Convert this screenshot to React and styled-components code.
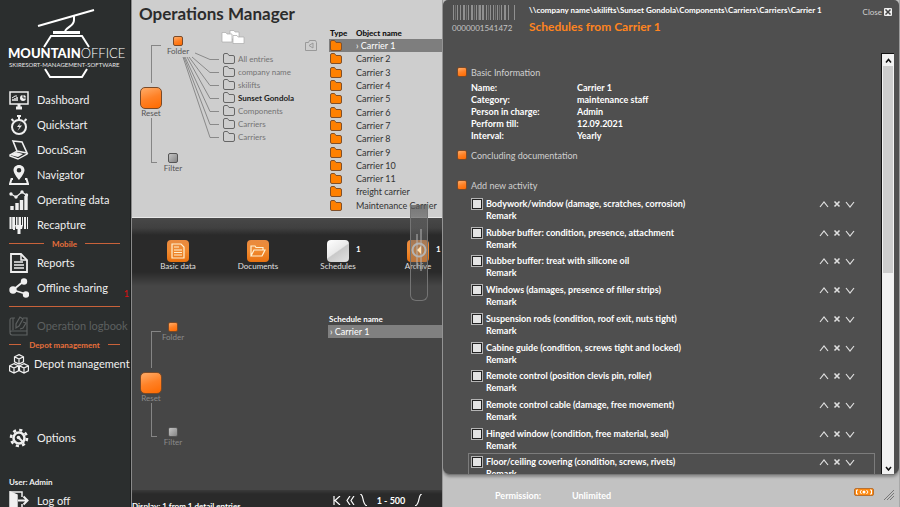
import React, { useState } from 'react'
import styled, { createGlobalStyle, css } from 'styled-components'

const GlobalStyle = createGlobalStyle`
  * { box-sizing: border-box; }
  body {
    margin: 0;
    background: #464646;
    font-family: Lato, "Open Sans", sans-serif;
    font-size: 9px;
    overflow: hidden;
  }
  button {
    border: 0;
    padding: 0;
    background: none;
    color: inherit;
    font: inherit;
    cursor: pointer;
  }
  svg { display: block; flex: none; }
  h1, h2, p, ul, dl, dd { margin: 0; padding: 0; }
  ul { list-style: none; }
`;

const Page = styled.div`
  display: flex;
  height: 100vh;
  overflow: hidden;
`;

/* ---------- sidebar ---------- */

const Sidebar = styled.nav`
  display: flex;
  flex-direction: column;
  flex: none;
  width: 131px;
  background: #2b2e2e;
  box-shadow: inset -1px 0 #1b1d1d;
  overflow: hidden;
  color: #f0f0f0;
`;

const LogoBox = styled.div`
  flex: none;
  height: 87px;
  padding-left: 5px;
`;

const NavItem = styled.a`
  display: flex;
  align-items: center;
  flex: none;
  gap: ${p => p.$tight ? 5 : 8}px;
  height: 25px;
  padding-left: 9px;
  margin-top: ${p => p.$space || 0}px;
  color: ${p => p.$off ? '#5d6060' : '#f0f0f0'};
  font-size: 11px;
  line-height: 14px;
  white-space: nowrap;
  text-decoration: none;
`;

const Badge = styled.span`
  align-self: flex-end;
  margin-left: auto;
  padding-right: 2px;
  color: #e01010;
  font-size: 9px;
  line-height: 12px;
`;

const Divider = styled.div`
  display: flex;
  align-items: center;
  flex: none;
  gap: 8px;
  height: 13px;
  margin: 0 11px 0 9px;
  color: #e8703c;
  font-size: 8px;
  font-weight: 700;
  white-space: nowrap;
  &::before, &::after {
    content: '';
    flex: 1;
    height: 1px;
    background: #c9623a;
  }
  ${p => p.$plain && css`gap: 0;`}
`;

const UserName = styled.p`
  flex: none;
  margin-top: 26px;
  padding-left: 9px;
  font-size: 8px;
  font-weight: 700;
  line-height: 12px;
`;

/* ---------- middle ---------- */

const Main = styled.main`
  display: flex;
  flex-direction: column;
  flex: 1;
  min-width: 0;
  border-left: 1px solid #8a8a8a;
  background: #464646;
  position: relative;
`;

const TopPane = styled.section`
  flex: none;
  height: 218px;
  padding-left: 7px;
  background: #cecece;
  border-bottom: 1px solid #e8e8e8;
  color: #333;
`;

const Title = styled.h1`
  height: 28px;
  color: #2c2c2c;
  font-size: 17px;
  line-height: 28px;
  white-space: nowrap;
`;

const PaneRow = styled.div`
  display: flex;
`;

const Branch = styled.div`
  flex: none;
  width: 58px;
  padding-top: ${p => p.$top}px;
  color: ${p => p.$dark ? '#8a8a8a' : '#555'};
  font-size: 8px;
`;

const BranchEnd = styled.div`
  display: flex;
  height: ${p => p.$height}px;
  padding-left: 12px;
  gap: ${p => p.$gap}px;
`;

const Corner = styled.span`
  flex: none;
  width: ${p => p.$bottom ? 6 : 10}px;
  border-left: 1px solid #858585;
  ${p => p.$bottom ? css`
    height: ${p => p.$line}px;
    border-bottom: 1px solid #858585;
  ` : css`
    margin: 9px 0 4px;
    border-top: 1px solid #858585;
  `}
`;

const NodeButton = styled.button`
  display: flex;
  flex-direction: column;
  align-items: center;
  align-self: ${p => p.$low ? 'flex-end' : 'flex-start'};
  gap: ${p => p.$big ? 0 : 1}px;
  line-height: 9px;
  width: 24px;
`;

const Square = styled.span`
  flex: none;
  width: ${p => p.$size || 10}px;
  height: ${p => p.$size || 10}px;
  border: 1px solid ${p => p.$grey ? '#555' : '#7a4a28'};
  border-radius: ${p => p.$size ? 5 : 2}px;
  background: ${p => p.$grey
    ? 'linear-gradient(135deg, #c4c4c4, #858585)'
    : 'linear-gradient(160deg, #ffa45c 10%, #ff8126 50%, #ff6a00)'};
`;

const Folders = styled.div`
  flex: none;
  width: 84px;
  padding-top: 1px;
`;

const FolderRow = styled.li`
  button {
    display: flex;
    align-items: center;
    gap: 3px;
    height: 13px;
    padding-left: 2px;
    color: ${p => p.$active ? '#222' : '#747474'};
    font-size: 8px;
    font-weight: ${p => p.$active ? 700 : 400};
    white-space: nowrap;
  }
`;

const FolderList = styled.ul`
  padding-top: 8px;
`;

const BackButton = styled.button`
  flex: none;
  align-self: flex-start;
  width: 24px;
  margin-top: 12px;
`;

const ObjectTable = styled.table`
  flex: 1;
  height: 184px;
  border-collapse: collapse;
  color: #333;
  font-size: 9px;
  line-height: 11px;
  text-align: left;
  white-space: nowrap;
  th { padding: 0; color: #111; font-size: 8px; font-weight: 900; }
  td { padding: 0; }
  th:first-child, td:first-child { width: 27px; padding-left: 1px; }
`;

const ObjectRow = styled.tr`
  ${p => p.$active && css`
    background: #7e7e7e;
    color: #fff;
  `}
`;

const Toolbar = styled.div`
  display: flex;
  flex: none;
  height: 72px;
  padding: 22px 0 0 6px;
  background: linear-gradient(#484848, #404040 10px, #2a2a2a 17px, #2a2a2a 54px, #464646 68px);
  overflow: hidden;
`;

const Tool = styled.button`
  display: flex;
  flex-direction: column;
  align-items: center;
  justify-content: flex-start;
  flex: none;
  width: 80px;
  color: #e0e0e0;
  font-size: 8px;
  line-height: 9px;
`;

const ToolIcon = styled.span`
  position: relative;
  display: flex;
  align-items: center;
  justify-content: center;
  width: 22px;
  height: 22px;
  border-radius: 4px;
  background: ${p => p.$white
    ? 'linear-gradient(145deg, #fff, #e9e9e9 48%, #c9c9c9 52%, #e2e2e2)'
    : 'linear-gradient(#e88a40, #f08a30 50%, #e8710f)'};
`;

const Count = styled.span`
  position: absolute;
  left: 29px;
  top: 5px;
  color: #fff;
  font-weight: 700;
`;

const BottomPane = styled.section`
  display: flex;
  flex: 1;
  min-height: 0;
  padding-left: 7px;
`;

const Schedules = styled.table`
  align-self: flex-start;
  flex: 1;
  margin: 22px 0 0 131px;
  border-collapse: collapse;
  color: #fff;
  text-align: left;
  th { height: 13px; padding: 0 1px; font-size: 8px; line-height: 10px; }
  td { height: 13px; padding: 0 2px; background: #808080; font-size: 9px; line-height: 11px; }
`;

const StatusBar = styled.footer`
  display: flex;
  flex: none;
  height: 17px;
  background: linear-gradient(#3a3a3a, #2a2a2a 4px);
  color: #fff;
  font-weight: 700;
  overflow: hidden;
`;

const StatusText = styled.p`
  width: 201px;
  padding-top: 11px;
  font-size: 8px;
  line-height: 10px;
  white-space: nowrap;
`;

const Pager = styled.div`
  display: flex;
  gap: 5px;
  padding-top: 4px;
  line-height: 14px;
  span { width: 38px; text-align: center; white-space: nowrap; }
`;

/* glass handle that floats over the list and the toolbar */
const Handle = styled.button`
  position: absolute;
  top: 205px;
  right: 14px;
  width: 18px;
  height: 96px;
  border: 1px solid #747474;
  border-top: 0;
  border-radius: 0 0 6px 6px;
  background: linear-gradient(rgba(90, 90, 90, .75), rgba(120, 120, 120, .4) 55px, transparent 80px);
`;

/* ---------- dialog ---------- */

const Dialog = styled.section`
  display: flex;
  flex-direction: column;
  flex: none;
  width: 458px;
  background: #c2c2c2;
  border-left: 1px solid #9a9a9a;
  border-right: 1px solid #a8a8a8;
  color: #fff;
`;

const Sheet = styled.div`
  display: flex;
  flex-direction: column;
  flex: 1;
  min-height: 0;
  padding-right: 5px;
  border-bottom: 1px solid #777;
  border-radius: 5px 5px 7px 7px;
  background: #4f4f4f;
  box-shadow: 0 2px 3px #888;
`;

const Header = styled.header`
  display: flex;
  flex: none;
  height: 53px;
  padding: 5px 2px 0 9px;
`;

const CodeBox = styled.div`
  width: 77px;
  color: #c4c4c4;
  font-size: 8px;
  line-height: 16px;
`;

const Heading = styled.div`
  flex: 1;
  p { font-size: 8px; font-weight: 700; line-height: 11px; white-space: nowrap; }
  h2 { margin-top: 3px; color: #ff8420; font-size: 12px; font-weight: 700; line-height: 15px; }
`;

const Close = styled.button`
  display: flex;
  align-items: center;
  gap: 2px;
  height: 14px;
  color: #d0d0d0;
  font-size: 8px;
`;

const Body = styled.div`
  display: flex;
  flex: 1;
  min-height: 0;
`;

const Content = styled.div`
  flex: 1;
  min-width: 0;
  padding: 13px 6px 0 14px;
  overflow-y: auto;
  scrollbar-width: none;
`;

const SectionButton = styled.button`
  display: flex;
  align-items: center;
  gap: 4px;
  height: 12px;
  margin-top: ${p => p.$space || 0}px;
  color: #cfcfcf;
  font-size: 9px;
`;

const Info = styled.dl`
  display: grid;
  grid-template-columns: 106px 1fr;
  grid-auto-rows: 12px;
  padding: 4px 0 0 14px;
  font-weight: 700;
  line-height: 12px;
`;

const Tasks = styled.ul`
  display: grid;
  grid-auto-rows: 1fr;
  height: 287px;
  padding: 0 0 0 11px;
  margin-top: 4px;
`;

const TaskRow = styled.li`
  display: flex;
  gap: 3px;
  padding: 2px 19px 0 2px;
  border: 1px solid ${p => p.$active ? '#7c7c7c' : 'transparent'};
  font-weight: 700;
  label { display: block; line-height: 12px; white-space: nowrap; }
  p { line-height: 12px; }
`;

const Check = styled.input`
  appearance: none;
  flex: none;
  width: 12px;
  height: 12px;
  margin: 0;
  border: 1px solid #b4b4b4;
  background: #e4e4e4;
  box-shadow: inset 0 0 0 1px #222;
  &:checked { background: #ff8420; }
`;

const Actions = styled.div`
  display: flex;
  align-items: center;
  gap: 4px;
  height: 12px;
  margin-left: auto;
`;

const Scrollbar = styled.div`
  display: flex;
  flex-direction: column;
  flex: none;
  width: 13px;
  border-left: 1px solid #111;
  border-top: 1px solid #111;
  background: #f2f2f2;
  button {
    display: flex;
    align-items: center;
    justify-content: center;
    height: 12px;
    background: #f2f2f2;
  }
`;

const Thumb = styled.div`
  height: 207px;
  margin: 0 1px;
  background: #cdcdcd;
`;

const Track = styled.div`
  flex: 1;
`;

const Footer = styled.footer`
  display: flex;
  align-items: center;
  flex: none;
  height: 32px;
  padding: 8px 5px 0 52px;
  font-size: 9px;
  font-weight: 700;
  span { width: 77px; }
  svg:first-of-type { margin: 0 9px 6px auto; }
`;

const Icon = ({ size = 20, children }) => (
  <svg width={size} height={size} viewBox="0 0 20 20" fill="none" stroke="currentColor" strokeWidth="1.5" aria-hidden="true">
    {children}
  </svg>
)

const navIcons = {
  dashboard: <>
    <path d="M1 2h18v12H1z" />
    <path d="M7 18h6M10 14v4" strokeWidth="3" />
    <path d="M4 11V9M6 11V8M8 11V7" />
    <path d="M3 8l3-2 2 0" strokeWidth="1" />
    <circle cx="14" cy="8" r="3" fill="currentColor" stroke="none" />
    <path d="M14 5v3h3" stroke="#2b2e2e" strokeWidth="1" />
  </>,
  quick: <>
    <circle cx="10" cy="12" r="7" strokeWidth="2" />
    <path d="M8 1h4M10 1v4" strokeWidth="2" />
    <path d="M2.500 4l2 2M17.500 4l-2 2" strokeWidth="2" />
    <path d="M12 7l-4 5h2.500L8.500 16l4.500-5.500h-3z" fill="currentColor" stroke="none" />
  </>,
  scan: <>
    <path d="M4 1l9 1 5 11-10-2z" strokeWidth="1.600" />
    <path d="M8 11l-7 4v1l8 3 9-5v-1" strokeWidth="1.400" />
    <path d="M1 15l6-3 7 2-5 3z" fill="currentColor" stroke="none" />
  </>,
  pin: <>
    <path d="M10 0C6.700 0 4.500 2.300 4.500 5.200 4.500 8.500 10 15 10 15s5.500-6.500 5.500-9.800C15.500 2.300 13.300 0 10 0zm0 3a2.300 2.300 0 110 4.600A2.300 2.300 0 0110 3z" fill="currentColor" fillRule="evenodd" stroke="none" />
    <path d="M4 14H2.500L1 19h18l-1.500-5H16" strokeWidth="2" />
  </>,
  data: <>
    <path d="M3 16v4M8 13v7M12.500 10v10M17 6v14" strokeWidth="3.400" />
    <path d="M2 4l5 3 6-5 4 3" strokeWidth="1.200" />
    <g fill="currentColor" stroke="none">
      <circle cx="2" cy="4" r="1.700" /><circle cx="7" cy="7" r="1.700" /><circle cx="13" cy="2" r="1.700" /><circle cx="17.500" cy="5" r="1.700" />
    </g>
  </>,
  barcode: <>
    <path d="M1.500 2v12M5 2v13M11 2v8M16 2v12" strokeWidth="2" />
    <path d="M3.300 2v12M7.500 2v9M9 2v8M13.500 2v9M18.500 2v12" strokeWidth="1" />
    <path d="M6 10h8l-1 4h-1.500v5h-3v-5H7z" fill="currentColor" stroke="none" />
  </>,
  report: <>
    <path d="M2 1h10l6 6v12H2z" strokeWidth="1.800" />
    <path d="M12 1v6h6M5 9h9M5 12h10M5 15h10" />
  </>,
  share: <>
    <path d="M15 3L4 12l13 4" strokeWidth="1.800" />
    <g fill="currentColor" stroke="none">
      <circle cx="15" cy="3.500" r="3.200" /><circle cx="4" cy="12" r="3.700" /><circle cx="17" cy="16.500" r="3.200" />
    </g>
  </>,
  logbook: <>
    <path d="M6 2H3C1 2 1 4 1 4v12c0 3 2 3 2 3h15v-4H3c-2 0-2 2-2 2M14 2h4v13" strokeWidth="1.200" />
    <path d="M11 1L7 8v4l3-2 4-7zM4 2v12M14 6l3 1-3 5-3 1" strokeWidth="1.200" />
  </>,
  cubes: <g strokeWidth="1.200">
    <path d="M10 0.600l4.500 2.200v5L10 10 5.500 7.800v-5zM5.500 2.800L10 5l4.500-2.200M10 5v5" />
    <path d="M5 9.600l4.500 2.200v5L5 19 .6 16.800v-5zM.6 11.800L5 14l4.500-2.200M5 14v5" />
    <path d="M15 9.600l4.400 2.200v5L15 19l-4.500-2.200v-5zM10.500 11.800L15 14l4.400-2.200M15 14v5" />
  </g>,
  gear: <>
    <circle cx="10" cy="10" r="5.500" strokeWidth="2.500" />
    <circle cx="10" cy="10" r="8" strokeWidth="2.600" strokeDasharray="3.100 3.180" />
    <path d="M10 10l5 5" strokeWidth="2" />
    <circle cx="9.500" cy="9.500" r="1.800" fill="currentColor" stroke="none" />
  </>,
  logoff: <>
    <path d="M1 1h12v5M13 13v6H1" />
    <path d="M1 1l7 3v16l-7-1z" fill="currentColor" />
    <path d="M9 9.500h8M14.500 5.500l4 4-4 4" strokeWidth="2" />
  </>,
}

const Logo = () => (
  <svg width="125" height="82" viewBox="0 0 125 82" role="img" aria-label="Mountain Office">
    <g fill="none" stroke="#fff">
      <path d="M33 26L89 10" strokeWidth="2" />
      <path d="M69 15v5c0 6-6 6-9 11" strokeWidth="2" />
      <path d="M48 32.500h27" strokeWidth="3" />
      <path d="M39 47l7-11h31l7 11" strokeWidth="2" />
      <path d="M40 69l5 8h32l5-8" strokeWidth="2" />
    </g>
    <text x="3" y="58" fill="#fff" fontSize="13" fontWeight="900">
      MOUNTAIN<tspan fontWeight="300">OFFICE</tspan>
    </text>
    <text x="4" y="67" fill="#e6e6e6" fontSize="6">SKIRESORT-MANAGEMENT-SOFTWARE</text>
  </svg>
)

const FolderIcon = ({ full }) => (
  <svg width="12" height="11" viewBox="0 0 12 11" aria-hidden="true">
    <path
      d="M.5 2q0-1.500 1.500-1.500h2.500l1.500 2h4q1.500 0 1.500 1.500v5q0 1.500-1.500 1.500H2Q.5 10.500.5 9z"
      fill={full ? '#ff8000' : 'none'}
      stroke={full ? '#80502a' : '#666'}
    />
  </svg>
)

const FolderStack = () => (
  <svg width="24" height="15" viewBox="0 0 24 15" fill="#fff" stroke="#aaa" strokeWidth=".7" aria-hidden="true">
    <path d="M9 1.500h4l1 1.500h4v7H9z" />
    <path d="M1 3.500h4l1 1.500h5v8H1z" />
    <path d="M12 6.500h4l1 1.500h6v6.500H12z" />
  </svg>
)

/* fan of lines from the folder node to every row of the list */
const Fan = () => (
  <svg width="24" height="115" viewBox="0 0 24 115" fill="none" stroke="#777" strokeWidth=".8" aria-hidden="true" style={{ overflow: 'visible' }}>
    <path d="M-2 25l15 6.500h9M-5 29l18 15.500h9M-8 29l21 28.500h9M-10 29l23 41.500h9M-12 29l25 54.500h9M-13 29l26 67.500h9M-14 29l27 80.500h9" />
  </svg>
)

const Barcode = () => (
  <svg width="64" height="15" viewBox="0 0 64 15" stroke="#909090" aria-hidden="true">
    <path d="M1.500 0v15M5.500 0v15M8.500 0v15M16.500 0v15M24.500 0v15M34.500 0v15M38.500 0v15M41.500 0v15M45.500 0v15M49.500 0v15M56.500 0v15M62.500 0v15" />
    <path d="M12 0v15M20 0v15M28 0v15M31 0v15M53 0v15" strokeWidth="2" />
    <path d="M3.500 0v15M14.500 0v15M22.500 0v15M26.500 0v15M36.500 0v15M43.500 0v15M47.500 0v15" stroke="#6e6e6e" />
  </svg>
)

const Stroke = ({ w = 10, h = 8, d, color = '#e0e0e0', width = 1.2 }) => (
  <svg width={w} height={h} viewBox={`0 0 ${w} ${h}`} fill="none" stroke={color} strokeWidth={width} aria-hidden="true">
    <path d={d} />
  </svg>
)

const NavLink = ({ icon, children, ...rest }) => (
  <NavItem href="#" {...rest}>
    <Icon>{navIcons[icon]}</Icon>
    {children}
  </NavItem>
)

const BranchTree = ({ dark, top, indent, upper, lower }) => (
  <Branch $top={top} $dark={dark}>
    <BranchEnd $height={upper} $gap={indent}>
      <Corner />
      <NodeButton><Square />Folder</NodeButton>
    </BranchEnd>
    <NodeButton $big><Square $size={22} />Reset</NodeButton>
    <BranchEnd $height={lower} $gap={4}>
      <Corner $bottom $line={lower - 10} />
      <NodeButton $low><Square $grey />Filter</NodeButton>
    </BranchEnd>
  </Branch>
)

const folders = ['All entries', 'company name', 'skilifts', 'Sunset Gondola', 'Components', 'Carriers', 'Carriers']

const objects = [
  'Carrier 1', 'Carrier 2', 'Carrier 3', 'Carrier 4', 'Carrier 5', 'Carrier 6', 'Carrier 7',
  'Carrier 8', 'Carrier 9', 'Carrier 10', 'Carrier 11', 'freight carrier', 'Maintenance Carrier',
]

const info = [
  ['Name:', 'Carrier 1'],
  ['Category:', 'maintenance staff'],
  ['Person in charge:', 'Admin'],
  ['Perform till:', '12.09.2021'],
  ['Interval:', 'Yearly'],
]

const tasks = [
  'Bodywork/window (damage, scratches, corrosion)',
  'Rubber buffer: condition, presence, attachment',
  'Rubber buffer: treat with silicone oil',
  'Windows (damages, presence of filler strips)',
  'Suspension rods (condition, roof exit, nuts tight)',
  'Cabine guide (condition, screws tight and locked)',
  'Remote control (position clevis pin, roller)',
  'Remote control cable (damage, free movement)',
  'Hinged window (condition, free material, seal)',
  'Floor/ceiling covering (condition, screws, rivets)',
]

function App() {

  const [selected, setSelected] = useState(0)

  return (
    <Page>
      <GlobalStyle />
      <Sidebar>
        <LogoBox><Logo /></LogoBox>
        <NavLink icon="dashboard">Dashboard</NavLink>
        <NavLink icon="quick">Quickstart</NavLink>
        <NavLink icon="scan">DocuScan</NavLink>
        <NavLink icon="pin">Navigator</NavLink>
        <NavLink icon="data">Operating data</NavLink>
        <NavLink icon="barcode">Recapture</NavLink>
        <Divider>Mobile</Divider>
        <NavLink icon="report">Reports</NavLink>
        <NavLink icon="share">Offline sharing<Badge>1</Badge></NavLink>
        <Divider $plain />
        <NavLink icon="logbook" $off>Operation logbook</NavLink>
        <Divider>Depot management</Divider>
        <NavLink icon="cubes" $tight>Depot management</NavLink>
        <NavLink icon="gear" $space={49}>Options</NavLink>
        <UserName>User: Admin</UserName>
        <NavLink icon="logoff">Log off</NavLink>
      </Sidebar>

      <Main>
        <TopPane>
          <Title>Operations Manager</Title>
          <PaneRow>
            <BranchTree top={8} indent={5} upper={51} lower={55} />
            <Fan />
            <Folders>
              <FolderStack />
              <FolderList>
                {folders.map((name, i) => (
                  <FolderRow key={i} $active={i === 3}>
                    <button><FolderIcon />{name}</button>
                  </FolderRow>
                ))}
              </FolderList>
            </Folders>
            <BackButton aria-label="Back">
              <Stroke w={12} h={11} d="M.5 2.500h3l1-2h6l1 2v8H.5zM8 3L4 5.500 8 8z" color="#999" width={1} />
            </BackButton>
            <ObjectTable>
              <thead>
                <tr><th>Type</th><th>Object name</th></tr>
              </thead>
              <tbody>
                {objects.map((name, i) => (
                  <ObjectRow key={name} $active={i === selected} onClick={() => setSelected(i)}>
                    <td><FolderIcon full /></td>
                    <td>{i === selected ? '› ' : ''}{name}</td>
                  </ObjectRow>
                ))}
              </tbody>
            </ObjectTable>
          </PaneRow>
        </TopPane>

        <Toolbar>
          <Tool>
            <ToolIcon>
              <Stroke w={14} h={16} d="M1 1h9l3 3v11H1zM3 4h5M3 7h8M3 9.500h8M3 12h8" color="#fff0d0" />
            </ToolIcon>
            Basic data
          </Tool>
          <Tool>
            <ToolIcon>
              <Stroke w={16} h={12} d="M1 11V1h4l1 1.500h7V5M1 11L4 5h11l-3 6z" color="#fff0d0" />
            </ToolIcon>
            Documents
          </Tool>
          <Tool>
            <ToolIcon $white><Count>1</Count></ToolIcon>
            Schedules
          </Tool>
          <Tool>
            <ToolIcon><Count>1</Count></ToolIcon>
            Archive
          </Tool>
        </Toolbar>

        <BottomPane>
          <BranchTree dark top={32} indent={0} upper={50} lower={44} />
          <Schedules>
            <thead><tr><th>Schedule name</th></tr></thead>
            <tbody><tr><td>› Carrier 1</td></tr></tbody>
          </Schedules>
        </BottomPane>

        <StatusBar>
          <StatusText>Display: 1 from 1 detail entries</StatusText>
          <Pager>
            <button aria-label="First"><Stroke w={8} h={9} d="M1 0v9M7 0L2 4.500 7 9" color="#fff" /></button>
            <button aria-label="Previous"><Stroke w={9} h={9} d="M4 0L1 4.500 4 9M8 0L5 4.500 8 9" color="#fff" /></button>
            <Stroke w={7} h={12} d="M0 0q2 0 3 5 1 6 4 7" color="#fff" />
            <span>1 - 500</span>
            <Stroke w={7} h={12} d="M7 0q-2 0-3 5-1 6-4 7" color="#fff" />
          </Pager>
        </StatusBar>

        <Handle aria-label="Slide panel">
          <svg width="16" height="50" viewBox="0 0 16 50" fill="none" stroke="#b4b4b4" aria-hidden="true">
            <path d="M6 6v34M10 1v42" />
            <circle cx="8" cy="22" r="6.500" strokeWidth="2" />
            <path d="M10 18l-4 4 4 4z" fill="#ffe0b0" stroke="none" />
          </svg>
        </Handle>
      </Main>

      <Dialog>
        <Sheet>
          <Header>
            <CodeBox><Barcode />0000001541472</CodeBox>
            <Heading>
              <p>{'\\\\company name\\skilifts\\Sunset Gondola\\Components\\Carriers\\Carriers\\Carrier 1'}</p>
              <h2>Schedules from Carrier 1</h2>
            </Heading>
            <Close>
              Close
              <svg width="8" height="8" viewBox="0 0 8 8" aria-hidden="true">
                <rect width="8" height="8" rx="1" fill="#f0f0f0" />
                <path d="M1.500 1.500l5 5M6.500 1.500l-5 5" stroke="#444" strokeWidth="1.500" />
              </svg>
            </Close>
          </Header>
          <Body>
            <Content>
              <SectionButton><Square />Basic Information</SectionButton>
              <Info>
                {info.map(([label, value]) => (
                  <React.Fragment key={label}>
                    <dt>{label}</dt>
                    <dd>{value}</dd>
                  </React.Fragment>
                ))}
              </Info>
              <SectionButton $space={7}><Square />Concluding documentation</SectionButton>
              <SectionButton $space={18}><Square />Add new activity</SectionButton>
              <Tasks>
                {tasks.map((task, i) => (
                  <TaskRow key={task} $active={i === 9}>
                    <Check type="checkbox" id={`task-${i}`} />
                    <div>
                      <label htmlFor={`task-${i}`}>{task}</label>
                      <p>Remark</p>
                    </div>
                    <Actions>
                      <button aria-label="Move up"><Stroke d="M1 7l4-5 4 5" /></button>
                      <button aria-label="Remove"><Stroke w={8} d="M1.500 1.500l5 5M6.500 1.500l-5 5" width={1.6} /></button>
                      <button aria-label="Move down"><Stroke d="M1 2l4 5 4-5" /></button>
                    </Actions>
                  </TaskRow>
                ))}
              </Tasks>
            </Content>
            <Scrollbar>
              <button aria-label="Scroll up"><Stroke w={7} h={5} d="M1 4.500l2.500-3 2.500 3" color="#111" width={1.5} /></button>
              <Thumb />
              <Track />
              <button aria-label="Scroll down"><Stroke w={7} h={5} d="M1 1l2.500 3L6 1" color="#111" width={1.5} /></button>
            </Scrollbar>
          </Body>
        </Sheet>
        <Footer>
          <span>Permission:</span>
          <span>Unlimited</span>
          <svg width="20" height="8" viewBox="0 0 20 8" aria-hidden="true">
            <rect x=".5" y=".5" width="19" height="7" rx="1.500" fill="#ff8a10" stroke="#b87030" />
            <path d="M4 2H2.500v4H4M16 2h1.500v4H16M7.500 2L6 4l1.500 2M12.500 2L14 4l-1.500 2" fill="none" stroke="#fff" />
            <circle cx="10" cy="4" r="1.500" fill="#fff" />
          </svg>
          <Stroke w={11} h={10} d="M1 10L11 0M4 10l7-7M7 10l4-4" color="#777" width={1} />
        </Footer>
      </Dialog>
    </Page>
  )
}

export default App
